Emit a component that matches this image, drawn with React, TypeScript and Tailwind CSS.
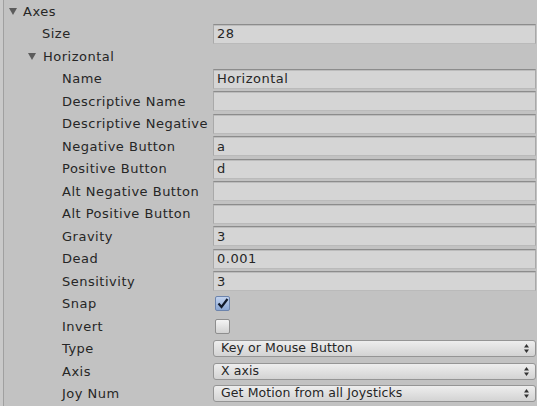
import React from "react";

type Row =
  | { kind: "fold"; label: string; indent: number; tri: number }
  | { kind: "text"; label: string; indent: number; value: string }
  | { kind: "check"; label: string; indent: number; checked: boolean }
  | { kind: "popup"; label: string; indent: number; value: string };

const rows: Row[] = [
  { kind: "fold", label: "Axes", indent: 19, tri: 5 },
  { kind: "text", label: "Size", indent: 38, value: "28" },
  { kind: "fold", label: "Horizontal", indent: 39, tri: 24 },
  { kind: "text", label: "Name", indent: 58, value: "Horizontal" },
  { kind: "text", label: "Descriptive Name", indent: 58, value: "" },
  { kind: "text", label: "Descriptive Negative", indent: 58, value: "" },
  { kind: "text", label: "Negative Button", indent: 58, value: "a" },
  { kind: "text", label: "Positive Button", indent: 58, value: "d" },
  { kind: "text", label: "Alt Negative Button", indent: 58, value: "" },
  { kind: "text", label: "Alt Positive Button", indent: 58, value: "" },
  { kind: "text", label: "Gravity", indent: 58, value: "3" },
  { kind: "text", label: "Dead", indent: 58, value: "0.001" },
  { kind: "text", label: "Sensitivity", indent: 58, value: "3" },
  { kind: "check", label: "Snap", indent: 58, checked: true },
  { kind: "check", label: "Invert", indent: 58, checked: false },
  { kind: "popup", label: "Type", indent: 58, value: "Key or Mouse Button" },
  { kind: "popup", label: "Axis", indent: 58, value: "X axis" },
  { kind: "popup", label: "Joy Num", indent: 58, value: "Get Motion from all Joysticks" },
];

function Triangle() {
  return (
    <svg width="8" height="7" viewBox="0 0 8 7" className="shrink-0">
      <polygon points="0,0 8,0 4,7" fill="#5c5c5c" />
    </svg>
  );
}

function TextField({ value }: { value: string }) {
  return (
    <div className="flex h-[20px] flex-1 items-center border border-t-[#8c8c8c] border-r-[#a9a9a9] border-b-[#bababa] border-l-[#a9a9a9] bg-[#d5d5d5] pl-[3px] shadow-[inset_0_1px_0_#bcbcbc]">
      {value}
    </div>
  );
}

function Checkbox({ checked }: { checked: boolean }) {
  return checked ? (
    <div className="ml-[2px] flex h-[15px] w-[15px] items-center justify-center rounded-[2px] border border-[#6c84ad] bg-gradient-to-b from-[#c2d3ee] to-[#8aa6d4]">
      <svg width="12" height="11" viewBox="0 0 12 11">
        <path d="M1.5 5.5 L4.5 9 L10.5 1" fill="none" stroke="#111a2b" strokeWidth="2.2" />
      </svg>
    </div>
  ) : (
    <div className="ml-[2px] h-[15px] w-[15px] rounded-[2px] border border-[#8e8e8e] bg-gradient-to-b from-[#f4f4f4] to-[#d2d2d2]" />
  );
}

function Popup({ value }: { value: string }) {
  return (
    <div className="flex h-[17px] flex-1 items-center justify-between rounded-[3px] border border-[#959595] bg-gradient-to-b from-[#eeeeee] to-[#d3d3d3] pr-[6px] pl-[7px] text-[12.5px] tracking-[0.1px]">
      <span>{value}</span>
      <svg width="5" height="9" viewBox="0 0 5 9">
        <polygon points="2.5,0 5,3.5 0,3.5" fill="#333" />
        <polygon points="0,5.5 5,5.5 2.5,9" fill="#333" />
      </svg>
    </div>
  );
}

export default function App() {
  return (
    <div className="flex h-[406px] w-[537px] overflow-hidden bg-[#c2c2c2] font-['DejaVu_Sans',sans-serif] text-[13px] tracking-[0.5px] text-[#262626]">
      <div className="w-[3px] bg-[#c9c9c9]" />
      <div className="w-px bg-[#a0a0a0]" />
      <div className="flex flex-1 flex-col pr-px">
        {rows.map((r, i) => (
          <div key={i} className="flex h-[22.5px] shrink-0 items-center">
            {r.kind === "fold" ? (
              <div className="flex items-center" style={{ paddingLeft: r.tri }}>
                <Triangle />
                <span style={{ paddingLeft: r.indent - r.tri - 8 }}>{r.label}</span>
              </div>
            ) : (
              <>
                <div className="w-[209px] shrink-0 whitespace-nowrap" style={{ paddingLeft: r.indent }}>
                  {r.label}
                </div>
                {r.kind === "text" && <TextField value={r.value} />}
                {r.kind === "check" && <Checkbox checked={r.checked} />}
                {r.kind === "popup" && <Popup value={r.value} />}
              </>
            )}
          </div>
        ))}
      </div>
    </div>
  );
}
